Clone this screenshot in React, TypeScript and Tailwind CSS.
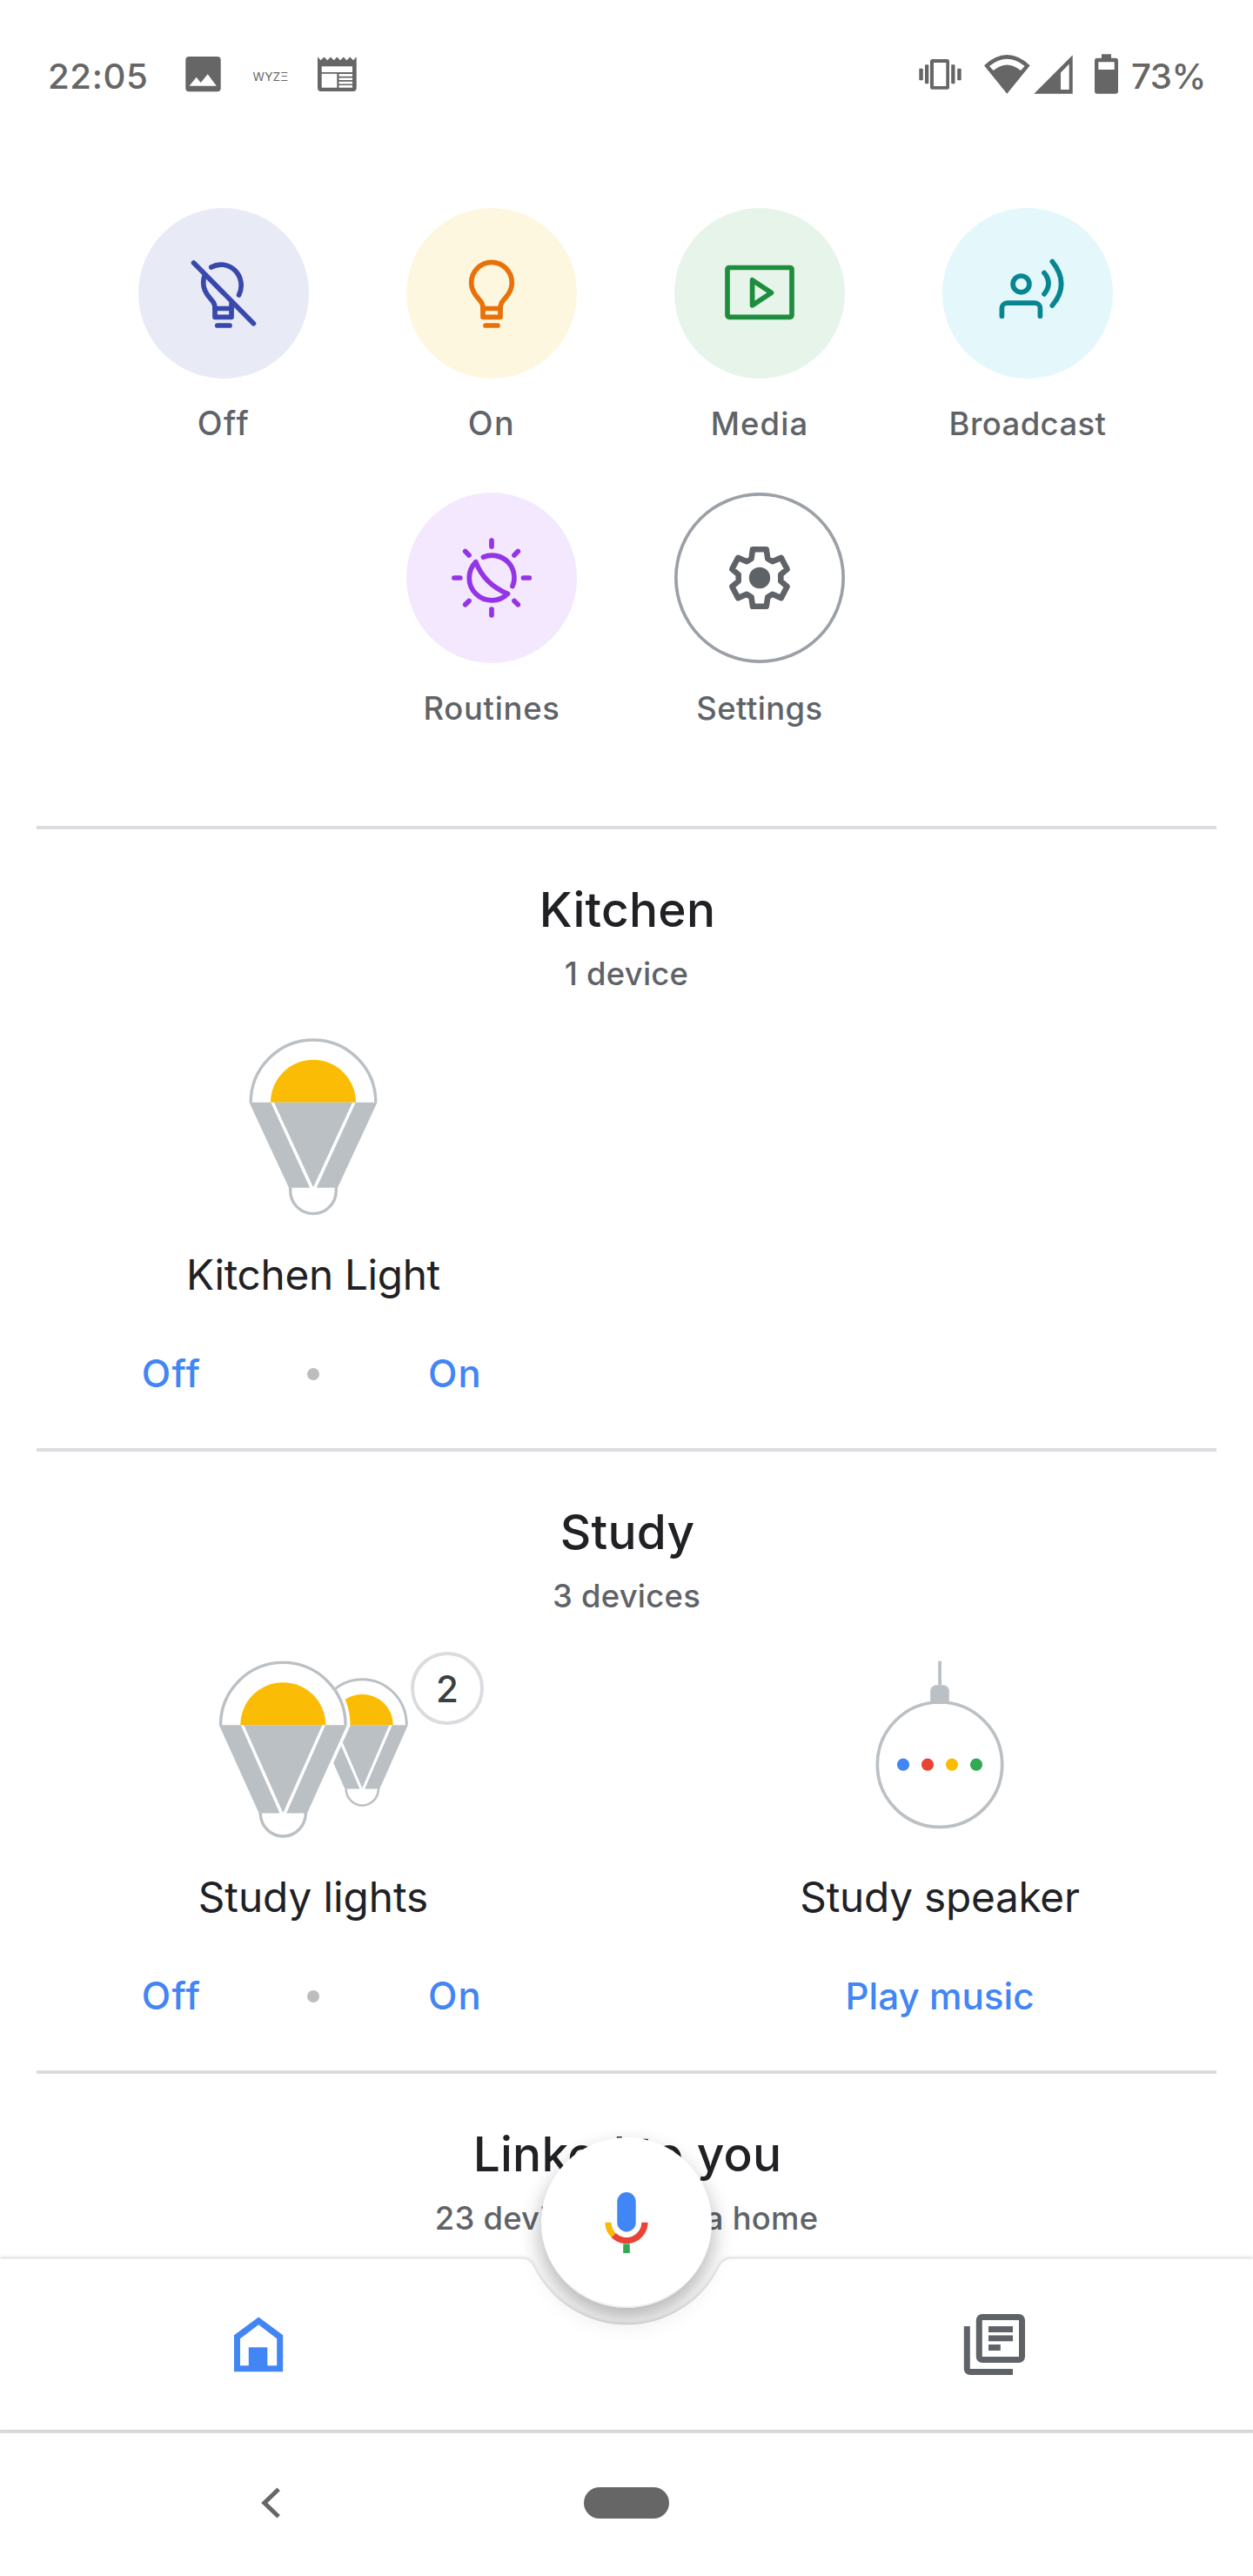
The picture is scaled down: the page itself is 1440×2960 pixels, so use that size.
import type { ReactNode } from "react";

function StatusBar() {
  return (
    <header className="flex h-[176px] items-center text-[40.2px] leading-[48px] font-medium text-[#666]">
      <span className="w-[154px] tracking-[0.6px]">22:05</span>
      <svg className="h-[60px] w-12" viewBox="209 58 48 60" fill="#666">
        <path
          fillRule="evenodd"
          d="M217.3 65H249.7A4 4 0 0 1 253.7 69V101.3A4 4 0 0 1 249.7 105.3H217.3A4 4 0 0 1 213.3 101.3V69A4 4 0 0 1 217.3 65ZM217.5 98.7H248.8L238.7 85.2L230.7 95L225.7 88.7Z"
        />
      </svg>
      <span className="w-[104px] pl-1 text-center text-[13.6px] leading-4 font-normal tracking-[0.2px]">WYZΞ</span>
      <svg className="h-[60px] w-[52px]" viewBox="361 58 52 60" fill="#666">
        <path
          fillRule="evenodd"
          d="M365 65.3L368.6 69.2L372.5 65.5L376.3 69.2L380 65.5L383.7 69.2L387.4 65.5L391 69.2L394.8 65.5L398.5 69.2L402.2 65.5L406 69.2L409.7 65.3V101A4 4 0 0 1 405.7 105H369A4 4 0 0 1 365 101ZM369.7 76.3V83H405V76.3ZM369.7 84.7V100.7H387.3V84.7ZM389.5 84.9V87.8H405V84.9ZM389.5 89.4V92.1H405V89.4ZM389.5 93.7V96.5H405V93.7ZM389.5 98.1V100.7H405V98.1Z"
        />
      </svg>
      <div className="ml-auto flex w-[390px] items-center">
        <svg className="h-[60px] w-[60px]" viewBox="1050 58 60 60" fill="#666">
          <path
            fillRule="evenodd"
            d="M1071.5 68H1088.5A2.5 2.5 0 0 1 1091 70.5V100.3A2.5 2.5 0 0 1 1088.5 102.8H1071.5A2.5 2.5 0 0 1 1069 100.3V70.5A2.5 2.5 0 0 1 1071.5 68ZM1073 72V99H1087.3V72Z"
          />
          <rect x="1063" y="74.3" width="4.3" height="21.9" rx="1" />
          <rect x="1056.3" y="78.7" width="4.5" height="13.5" rx="1" />
          <rect x="1093.2" y="74.3" width="4.3" height="21.9" rx="1" />
          <rect x="1100.2" y="78.7" width="4.5" height="13.5" rx="1" />
        </svg>
        <svg className="ml-4 h-[60px] w-[60px]" viewBox="1126 58 60 60">
          <path d="M1131 75.2Q1157.3 51 1183.7 75.2L1157.3 107.7Z" fill="#666" />
          <path d="M1137 76Q1157.3 59.6 1177.7 76L1173 81Q1157.3 68 1141.7 81Z" fill="#fff" />
        </svg>
        <svg className="h-[60px] w-[52px]" viewBox="1186 58 52 60" fill="#666">
          <path fillRule="evenodd" d="M1188.3 107.7L1232.7 63.3V107.7ZM1219 83.5L1228.7 73.6V103H1219Z" />
        </svg>
        <svg className="ml-3 h-[60px] w-11" viewBox="1250 58 44 60" fill="#666">
          <path
            fillRule="evenodd"
            d="M1266 62.3H1277V66.7H1282A3 3 0 0 1 1285 69.7V104.7A3 3 0 0 1 1282 107.7H1261A3 3 0 0 1 1258 104.7V69.7A3 3 0 0 1 1261 66.7H1266ZM1262.3 71.3V80H1280.7V71.3Z"
          />
        </svg>
        <span className="ml-1.5 tracking-[-0.49px]">73%</span>
      </div>
    </header>
  );
}

const line = {
  fill: "none",
  strokeWidth: 5.7,
  strokeLinecap: "round" as const,
  strokeLinejoin: "round" as const,
};

function BulbOffIcon() {
  return (
    <svg viewBox="0 0 196 196" stroke="#3949ab" {...line}>
      <path d="M63.6 63L132.4 132.7" />
      <path d="M83.8 68A23.2 24 0 0 1 115.6 100" />
      <path d="M76.2 77.5C75 80.5 74.7 83 74.7 86C74.7 92 77.5 98 82.2 103.3C86 107.5 88 110 88 115.5V125.3H107V110" />
      <path d="M88 115.5H107" />
      <path d="M90.8 135H105" />
    </svg>
  );
}

function BulbOnIcon() {
  return (
    <svg viewBox="0 0 196 196" stroke="#e8710a" {...line}>
      <path d="M88 115.5C88 110 86 107.5 82.2 103.3C77.5 98 74.7 92 74.7 86A23.3 23.6 0 0 1 121.3 86C121.3 92 118.5 98 113.8 103.3C110 107.5 108 110 108 115.5V125.3H88Z" />
      <path d="M88 115.5H108" />
      <path d="M91 135H105" />
    </svg>
  );
}

function MediaIcon() {
  return (
    <svg viewBox="0 0 196 196" stroke="#1e8e3e" {...line}>
      <rect x="61" y="68.5" width="74" height="56.8" rx="2" />
      <path d="M89.6 82.8V111.8L111.5 97.4Z" />
    </svg>
  );
}

function BroadcastIcon() {
  return (
    <svg viewBox="0 0 196 196" stroke="#078691" {...line}>
      <circle cx="90.5" cy="87.4" r="9.4" />
      <path d="M68.4 124.2V115.2A6 6 0 0 1 74.4 109.2H106.4A6 6 0 0 1 112.4 115.2V124.2" />
      <path d="M117 74.4Q127 86.5 117 98.9" />
      <path d="M126.3 61.5Q147 87.5 126.3 112" />
    </svg>
  );
}

function RoutinesIcon() {
  return (
    <svg viewBox="0 0 196 196" stroke="#9334e6" {...line}>
      <path d="M98 55.2V62M98 134V140.8M55 98H61.8M134.5 98H141.3M67.7 67.6L72 72M124 124.4L128.3 128.8M128.3 67.6L124 72M72 124.4L67.7 128.8" />
      <path d="M88.5 74.2A25.5 25.5 0 0 1 122 107.5" />
      <path d="M79.8 79.7A25.5 25.5 0 1 0 116.5 116.3C99 109 86 96 79.8 79.7Z" />
    </svg>
  );
}

function SettingsIcon() {
  return (
    <svg viewBox="0 0 196 196" stroke="#5f6368" {...line} strokeWidth={6.6}>
      <path d="M90 65.3H105.7L107.3 76L112.7 79.2L122.7 74.9L129.6 88L122.3 94.3V101.7L129.6 108L122.7 121.1L112.7 116.8L107.3 120L105.7 130.7H90L88.5 120L83.2 116.8L73.2 121.1L66.3 108L73.7 101.7V94.3L66.3 88L73.2 74.9L83.2 79.2L88.5 76Z" />
      <circle cx="98" cy="98" r="12.2" fill="#5f6368" stroke="none" />
    </svg>
  );
}

function Shortcut({ label, circle, text, children }: { label: string; circle: string; text: string; children: ReactNode }) {
  return (
    <div className="flex w-[308px] flex-col items-center">
      <div className={`size-[196px] rounded-full ${circle}`}>{children}</div>
      <span className={`mt-[30px] text-[36.4px] leading-[44px] font-medium text-[#5f6368] ${text}`}>{label}</span>
    </div>
  );
}

/* Smart bulb artwork centred on the base of its dome: dome, lit core, three-part cone and a rounded cap. */
function BulbShape() {
  return (
    <>
      <path d="M-73.5 0A73.5 73.5 0 0 1 73.5 0L28 98V101.5A28 28 0 0 1 -28 101.5V98Z" fill="#fff" />
      <path d="M-71.8 0A71.8 71.8 0 0 1 71.8 0" fill="none" stroke="#bbc0c4" strokeWidth="3.4" />
      <path d="M-49 0A49 49 0 0 1 49 0Z" fill="#fabc05" />
      <path d="M-73.5 0H-48.7L-3.9 98H-28ZM-45 0H45L0 97.5ZM73.5 0H48.7L3.9 98H28Z" fill="#bbc0c4" />
      <path d="M-26.3 97V101.5A26.3 26.3 0 0 0 26.3 101.5V97" fill="none" stroke="#bbc0c4" strokeWidth="3.4" />
    </>
  );
}

/* Variant used in groups: slightly longer cone and a shallower cap. */
function GroupBulbShape() {
  return (
    <>
      <path d="M-73.5 0A73.5 73.5 0 0 1 73.5 0L27.7 101.2A27.7 28 0 0 1 -27.7 101.2Z" fill="#fff" />
      <path d="M-71.8 0A71.8 71.8 0 0 1 71.8 0" fill="none" stroke="#bbc0c4" strokeWidth="3.4" />
      <path d="M-49 0A49 49 0 0 1 49 0Z" fill="#fabc05" />
      <path d="M-73.5 0H-48.7L-3.9 101.2H-27.7ZM-45 0H45L0 101ZM73.5 0H48.7L3.9 101.2H27.7Z" fill="#bbc0c4" />
      <path d="M-26 100.5V101.2A26 26.6 0 0 0 26 101.2V100.5" fill="none" stroke="#bbc0c4" strokeWidth="3.4" />
    </>
  );
}

function BulbArt() {
  return (
    <svg className="h-[208px] w-[160px]" viewBox="-80 -75.8 160 208">
      <BulbShape />
    </svg>
  );
}

function BulbGroupArt() {
  return (
    <div className="relative h-[208px] w-[308px]">
      <svg className="h-[208px] w-[308px]" viewBox="206 1905.8 308 208">
        <g transform="translate(416.3 1982)">
          <path d="M-52.5 0H-34.5L-2.9 73.3H-20ZM-31 0H31L0 72.5ZM52.5 0H34.5L2.9 73.3H20Z" fill="#bbc0c4" />
          <path d="M-35.5 0A35.5 35.5 0 0 1 35.5 0Z" fill="#fabc05" />
          <path d="M-18.7 73A18.7 19.3 0 0 0 18.7 73" fill="none" stroke="#bbc0c4" strokeWidth="2.6" />
        </g>
        <path
          transform="translate(325.3 1982)"
          d="M-73.5 0A73.5 73.5 0 0 1 73.5 0L27.7 101.2A27.7 28 0 0 1 -27.7 101.2Z"
          fill="#fff"
          stroke="#fff"
          strokeWidth="7.5"
        />
        <path d="M365.3 1982A51 52.5 0 0 1 467.3 1982" fill="none" stroke="#bbc0c4" strokeWidth="2.9" />
        <g transform="translate(325.3 1982)">
          <GroupBulbShape />
        </g>
      </svg>
      <span className="absolute -top-2 left-[266px] flex size-[84px] items-center justify-center rounded-full border-4 border-[#dadce0] bg-white text-[42px] font-medium text-[#3c4043]">
        2
      </span>
    </div>
  );
}

function SpeakerArt() {
  return (
    <svg className="h-[208px] w-[160px]" viewBox="1000 1905.8 160 208">
      <path d="M1078.2 1908.5H1082V1936H1078.2Z" fill="#bbc0c4" />
      <circle cx="1080" cy="2027.5" r="71.7" fill="#fff" stroke="#bbc0c4" strokeWidth="3.7" />
      <path d="M1069.2 1957.5V1943A7 7 0 0 1 1076.2 1936H1083.8A7 7 0 0 1 1090.8 1943V1957.5Z" fill="#bbc0c4" />
      <circle cx="1038" cy="2027.5" r="7.1" fill="#4285f4" />
      <circle cx="1066" cy="2027.5" r="7.1" fill="#ea4335" />
      <circle cx="1094" cy="2027.5" r="7.1" fill="#fabc05" />
      <circle cx="1122" cy="2027.5" r="7.1" fill="#34a853" />
    </svg>
  );
}

function OffOn() {
  return (
    <div className="grid w-[489px] grid-cols-3 items-center justify-items-center text-[43.6px] tracking-[1.2px]">
      <span>Off</span>
      <span className="size-3.5 rounded-full bg-[#bdbdbd]" />
      <span>On</span>
    </div>
  );
}

function Device({ name, tracking, art, actions }: { name: string; tracking: string; art: ReactNode; actions: ReactNode }) {
  return (
    <div className="flex flex-col items-center">
      {art}
      <h3 className={`mt-[38px] text-[47.7px] leading-[56px] font-normal text-[#202124] ${tracking}`}>{name}</h3>
      <div className="mt-[60px] flex justify-center text-[42.2px] leading-[52px] font-medium text-[#4285f4]">{actions}</div>
    </div>
  );
}

function Room({ title, subtitle, children }: { title: string; subtitle: string; children?: ReactNode }) {
  return (
    <section className="h-[715px] shrink-0">
      <div className="mx-[42px] h-1 bg-[#dadce0]" />
      <h2 className="mt-[60px] pl-0.5 text-center text-[55px] leading-[64px] font-medium tracking-[0.25px] text-[#202124]">
        {title}
      </h2>
      <p className="mt-5 text-center text-[36.4px] leading-[44px] font-medium tracking-[0.25px] text-[#5f6368]">{subtitle}</p>
      <div className="mt-[50px] grid grid-cols-2">{children}</div>
    </section>
  );
}

function MicIcon() {
  return (
    <svg className="size-[196px]" viewBox="622 2456 196 196">
      <rect x="709.3" y="2519" width="21.4" height="45.5" rx="10.7" fill="#4285f4" />
      <path d="M699 2553.7A21 21 0 0 0 705.2 2568.5" fill="none" stroke="#f9b806" strokeWidth="7.2" />
      <path d="M705.2 2568.5A21 21 0 0 0 741 2553.7" fill="none" stroke="#ea4335" strokeWidth="7.2" />
      <rect x="716.2" y="2578.5" width="7.6" height="10.5" fill="#34a853" />
    </svg>
  );
}

function BottomBar() {
  return (
    <footer className="relative h-[365px] shrink-0">
      <div className="absolute -top-[139px] left-[622px] size-[196px] rounded-full shadow-[0_12px_24px_0_rgba(0,0,0,0.2)]" />
      <svg
        className="absolute -top-[20px] left-0 h-[217px] w-full drop-shadow-[0_-1px_2px_rgba(0,0,0,0.2)]"
        viewBox="0 2575 1440 217"
      >
        <path
          d="M-10 2595.5H600Q609 2595.5 613.500 2605A118.7 118.7 0 0 0 826.5 2605Q831 2595.5 840 2595.5H1450V2800H-10Z"
          fill="#fff"
        />
      </svg>
      <div className="absolute -top-[139px] left-[622px] size-[196px] rounded-full border-b-2 border-[#eee] bg-white shadow-[0_14px_30px_0_rgba(0,0,0,0.12)]">
        <MicIcon />
      </div>
      <nav className="relative flex h-[197px] items-center justify-between pr-[260px] pl-[265px]">
        <svg className="h-[72px] w-16" viewBox="265 2658 64 72" fill="#4285f4">
          <path
            fillRule="evenodd"
            d="M297.2 2662.5L325.2 2683.3V2725.3H269V2683.3ZM297.2 2671.3L276 2687.2V2718.3H285.8V2697.2H307.3V2718.3H318.2V2687.2Z"
          />
        </svg>
        <svg className="h-[72px] w-[74px]" viewBox="1106 2658 74 72" fill="#5f6368">
          <path
            fillRule="evenodd"
            d="M1128.8 2659H1171A7 7 0 0 1 1178 2666V2708A7 7 0 0 1 1171 2715H1128.8A7 7 0 0 1 1121.8 2708V2666A7 7 0 0 1 1128.8 2659ZM1128.8 2666V2708H1171V2666Z"
          />
          <path d="M1136 2673H1164V2680H1136ZM1136 2683.5H1164V2690.3H1136ZM1136 2694H1149.8V2701H1136Z" />
          <path d="M1107.8 2673H1114.8V2722H1164V2729H1114.8A7 7 0 0 1 1107.8 2722Z" />
        </svg>
      </nav>
      <div className="flex h-[168px] items-center border-t-4 border-[#dedede] pb-1 pl-[299px]">
        <svg className="h-10 w-6" viewBox="299 2856 24 40" fill="none" stroke="#666" strokeWidth="5">
          <path d="M320.2 2860.3L303.8 2876L320.2 2891.7" strokeLinejoin="miter" />
        </svg>
        <span className="ml-[348px] h-9 w-[98px] rounded-full bg-[#666]" />
      </div>
    </footer>
  );
}

export default function App() {
  return (
    <div className="flex h-[2960px] w-[1440px] flex-col overflow-hidden bg-white font-['Inter',sans-serif]">
      <main className="h-[2595px] overflow-hidden">
        <div className="pl-[55px]">
          <StatusBar />
        </div>
        <div className="mt-[63px] mb-[113px] ml-[103px] flex w-[1232px] flex-wrap justify-center gap-y-[57px]">
          <Shortcut label="Off" circle="bg-[#e8eaf6]" text="tracking-[1.6px] text-[37.6px]">
            <BulbOffIcon />
          </Shortcut>
          <Shortcut label="On" circle="bg-[#fef7e0]" text="tracking-[1.6px] text-[37.6px]">
            <BulbOnIcon />
          </Shortcut>
          <Shortcut label="Media" circle="bg-[#e6f4ea]" text="tracking-[1.1px]">
            <MediaIcon />
          </Shortcut>
          <Shortcut label="Broadcast" circle="bg-[#e4f7fb]" text="tracking-[0.46px]">
            <BroadcastIcon />
          </Shortcut>
          <Shortcut label="Routines" circle="bg-[#f3e8fd]" text="tracking-[0.72px]">
            <RoutinesIcon />
          </Shortcut>
          <Shortcut label="Settings" circle="shadow-[inset_0_0_0_3.7px_#9aa0a6]" text="tracking-[0.43px]">
            <SettingsIcon />
          </Shortcut>
        </div>
        <Room title="Kitchen" subtitle="1 device">
          <Device name="Kitchen Light" tracking="tracking-[-0.31px]" art={<BulbArt />} actions={<OffOn />} />
        </Room>
        <Room title="Study" subtitle="3 devices">
          <Device name="Study lights" tracking="tracking-[-0.04px]" art={<BulbGroupArt />} actions={<OffOn />} />
          <Device name="Study speaker" tracking="tracking-[-0.23px]" art={<SpeakerArt />} actions={<span>Play music</span>} />
        </Room>
        <Room title="Linked to you" subtitle="23 devices not in a home" />
      </main>
      <BottomBar />
    </div>
  );
}
